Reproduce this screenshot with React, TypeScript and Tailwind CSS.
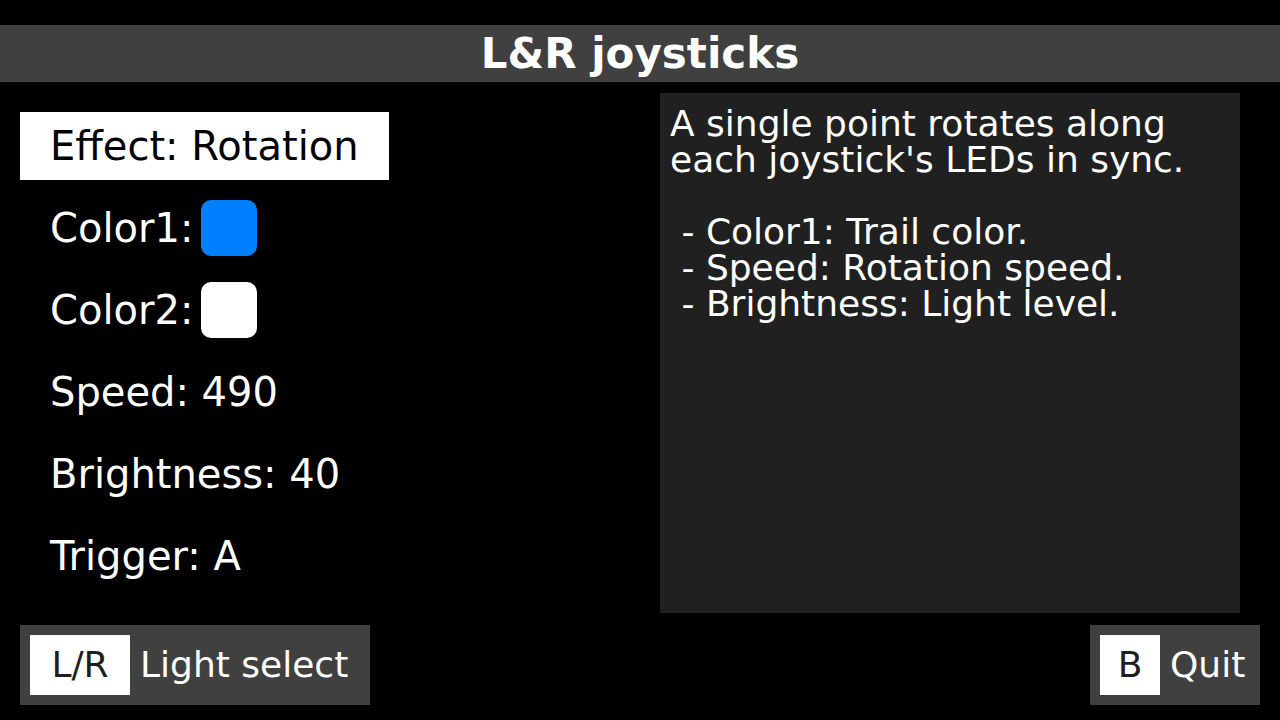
const rows = ["Speed: 490", "Brightness: 40", "Trigger: A"];

const description = [
  "A single point rotates along",
  "each joystick's LEDs in sync.",
  "",
  " - Color1: Trail color.",
  " - Speed: Rotation speed.",
  " - Brightness: Light level.",
].join("\n");

const KeyButton = ({ keyLabel, label, className }: { keyLabel: string; label: string; className: string }) => {
  return (
    <div className={`h-[80px] bg-[#404040] flex items-center p-[10px] ${className}`}>
      <div className="h-[60px] bg-white text-[#1e1e1e] flex items-center justify-center text-[36px] shrink-0">
        {keyLabel}
      </div>
      <span className="ml-[10px] text-[36px] text-white whitespace-nowrap">{label}</span>
    </div>
  );
};

export default function App() {
  return (
    <div className="w-[1280px] h-[720px] bg-black text-white flex flex-col pt-[25px] font-['DejaVu_Sans',sans-serif] overflow-hidden">
      <header className="h-[57px] bg-[#404040] flex items-center justify-center">
        <h1 className="text-[42px] font-bold leading-none">L&amp;R joysticks</h1>
      </header>

      <main className="flex px-[20px] pt-[11px]">
        <section className="w-[640px] flex flex-col pt-[12px]">
          <div className="h-[82px] flex items-center">
            <div className="w-[369px] h-[68px] bg-white text-black flex items-center pl-[30px] text-[40px]">
              Effect: Rotation
            </div>
          </div>
          <div className="h-[82px] flex items-center pl-[30px] text-[40px]">
            <span>Color1:</span>
            <div className="ml-[8px] w-[56px] h-[56px] rounded-[10px] bg-[#0080ff]" />
          </div>
          <div className="h-[82px] flex items-center pl-[30px] text-[40px]">
            <span>Color2:</span>
            <div className="ml-[8px] w-[56px] h-[56px] rounded-[10px] bg-white" />
          </div>
          {rows.map((row) => (
            <div key={row} className="h-[82px] flex items-center pl-[30px] text-[40px]">
              {row}
            </div>
          ))}
        </section>

        <section className="w-[580px] h-[520px] bg-[#202020] pl-[10px] pt-[13px]">
          <p className="text-[36px] leading-[36px] whitespace-pre">{description}</p>
        </section>
      </main>

      <footer className="flex justify-between px-[20px] mt-[12px]">
        <KeyButton keyLabel="L/R" label="Light select" className="w-[350px] [&>div]:w-[100px]" />
        <KeyButton keyLabel="B" label="Quit" className="w-[170px] [&>div]:w-[60px]" />
      </footer>
    </div>
  );
}
